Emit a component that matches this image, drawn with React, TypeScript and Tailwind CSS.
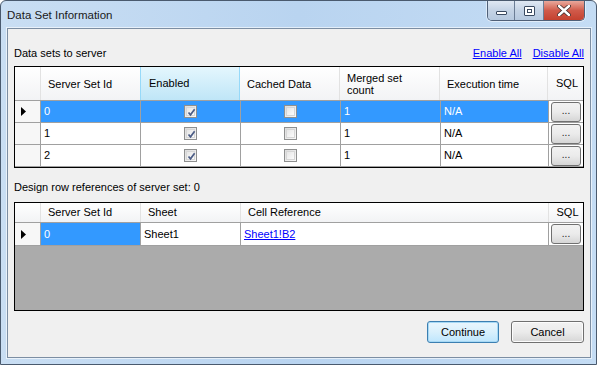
import React from "react";

const font = "font-['Liberation_Sans',Arial,sans-serif]";

function Triangle() {
  return (
    <svg width="5" height="9" viewBox="0 0 5 9" className="block">
      <path d="M0 0 L5 4.5 L0 9 Z" fill="#000" />
    </svg>
  );
}

function CheckBox({ checked }: { checked: boolean }) {
  return (
    <div className="h-[13px] w-[13px] border border-[#8e8f8f] bg-gradient-to-br from-[#dcdcdc] to-[#f8f8f8] p-[1px]">
      <div className="h-full w-full border border-[#d6d6d6] bg-gradient-to-br from-[#e6e6e6] to-[#fbfbfb]">
        {checked && (
          <svg width="9" height="9" viewBox="0 0 9 9" className="block">
            <path d="M1.5 4.5 L3.5 6.8 L7.6 1.2" stroke="#4c5d86" strokeWidth="1.7" fill="none" />
          </svg>
        )}
      </div>
    </div>
  );
}

function DotsButton() {
  return (
    <div className="flex h-[20px] w-[30px] items-center justify-center rounded-[3px] border border-[#707070] bg-gradient-to-b from-[#f2f2f2] via-[#ebebeb] to-[#d6d6d6] text-[10px] leading-none text-[#222]">
      <span className="-mt-[1px]">...</span>
    </div>
  );
}

const cols1 = [
  { label: "Server Set Id", w: "w-[100px]" },
  { label: "Enabled", w: "w-[100px]", hot: true },
  { label: "Cached Data", w: "w-[100px]" },
  { label: "Merged set count", w: "w-[100px]", wrap: true },
  { label: "Execution time", w: "w-[108px]" },
];

const rows1 = ["0", "1", "2"];

function TopGrid() {
  return (
    <div className="mx-[6px] flex flex-col border border-black bg-white">
      <div className="flex h-[34px] border-b border-[#a0a0a0] bg-gradient-to-b from-white to-[#f2f3f5]">
        <div className="w-[26px] shrink-0 border-r border-[#e2e2e2]" />
        {cols1.map((c) =>
          c.hot ? (
            <div
              key={c.label}
              className={`${c.w} -ml-[1px] flex shrink-0 items-center border-x border-[#96d9f9] bg-gradient-to-b from-[#e4f6fd] to-[#bfe6f7] pl-[8px]`}
            >
              {c.label}
            </div>
          ) : (
            <div
              key={c.label}
              className={`${c.w} flex shrink-0 items-center border-r border-[#e2e2e2] pl-[7px] leading-[12px]`}
            >
              {c.wrap ? (
                <span>
                  Merged set
                  <br />
                  count
                </span>
              ) : (
                c.label
              )}
            </div>
          )
        )}
        <div className="flex flex-1 items-center justify-center pl-[3px]">SQL</div>
      </div>
      {rows1.map((id, i) => {
        const sel = i === 0;
        const cell = sel ? "bg-[#3399ff] text-white" : "bg-white text-black";
        return (
          <div key={id} className="flex h-[22px] border-b border-[#a0a0a0]">
            <div className="flex w-[26px] shrink-0 items-center border-r border-[#a0a0a0] bg-[#f7f7f7] pl-[6px]">
              {sel && <Triangle />}
            </div>
            <div className={`flex w-[100px] shrink-0 items-center border-r border-[#a0a0a0] pl-[3px] ${cell}`}>{id}</div>
            <div className={`flex w-[100px] shrink-0 items-center justify-center border-r border-[#a0a0a0] ${cell}`}>
              <CheckBox checked />
            </div>
            <div className={`flex w-[100px] shrink-0 items-center justify-center border-r border-[#a0a0a0] ${cell}`}>
              <CheckBox checked={false} />
            </div>
            <div className={`flex w-[100px] shrink-0 items-center border-r border-[#a0a0a0] pl-[3px] ${cell}`}>1</div>
            <div className={`flex w-[108px] shrink-0 items-center border-r border-[#a0a0a0] pl-[3px] ${cell}`}>N/A</div>
            <div className="flex flex-1 items-center justify-center bg-white">
              <DotsButton />
            </div>
          </div>
        );
      })}
    </div>
  );
}

function BottomGrid() {
  return (
    <div className="mx-[6px] flex flex-col border border-black bg-[#ababab]">
      <div className="flex h-[20px] border-b border-[#a0a0a0] bg-gradient-to-b from-white to-[#f2f3f5]">
        <div className="w-[26px] shrink-0 border-r border-[#e2e2e2]" />
        <div className="flex w-[100px] shrink-0 items-center border-r border-[#e2e2e2] pl-[7px]">Server Set Id</div>
        <div className="flex w-[100px] shrink-0 items-center border-r border-[#e2e2e2] pl-[7px]">Sheet</div>
        <div className="flex w-[308px] shrink-0 items-center border-r border-[#e2e2e2] pl-[7px]">Cell Reference</div>
        <div className="flex flex-1 items-center justify-center pl-[3px]">SQL</div>
      </div>
      <div className="flex h-[23px] border-b border-[#a0a0a0]">
        <div className="flex w-[26px] shrink-0 items-center border-r border-[#a0a0a0] bg-[#f7f7f7] pl-[6px]">
          <Triangle />
        </div>
        <div className="flex w-[100px] shrink-0 items-center border-r border-[#a0a0a0] bg-[#3399ff] pl-[3px] text-white">0</div>
        <div className="flex w-[100px] shrink-0 items-center border-r border-[#a0a0a0] bg-white pl-[3px]">Sheet1</div>
        <div className="flex w-[308px] shrink-0 items-center border-r border-[#a0a0a0] bg-white pl-[3px]">
          <span className="text-[#0000ff] underline">Sheet1!B2</span>
        </div>
        <div className="flex flex-1 items-center justify-center bg-white">
          <DotsButton />
        </div>
      </div>
      <div className="h-[64px]" />
    </div>
  );
}

function TitleButtons() {
  return (
    <div className="flex h-[20px] items-stretch overflow-hidden rounded-b-[5px] border border-t-0 border-[#4f6078] shadow-[0_0_0_1px_rgba(255,255,255,0.5)]">
      <div className="flex w-[27px] items-center justify-center border-r border-[#6b7d95] bg-gradient-to-b from-[#dfe8f3] via-[#c4d3e5] to-[#b6c9df]">
        <div className="mt-[4px] h-[4px] w-[11px] rounded-[1px] border border-[#3a4a60] bg-white" />
      </div>
      <div className="flex w-[29px] items-center justify-center border-r border-[#6b7d95] bg-gradient-to-b from-[#dfe8f3] via-[#c4d3e5] to-[#b6c9df]">
        <div className="flex h-[10px] w-[11px] items-center justify-center rounded-[1px] border border-[#3a4a60] bg-white">
          <div className="h-[4px] w-[5px] border border-[#3a4a60]" />
        </div>
      </div>
      <div className="flex w-[40px] items-center justify-center bg-gradient-to-b from-[#e8a89c] via-[#d05a4a] to-[#c4412f]">
        <svg width="14" height="11" viewBox="0 0 14 11">
          <path d="M2 1 L12 10 M12 1 L2 10" stroke="#3a2a2a" strokeWidth="4" strokeLinecap="round" />
          <path d="M2 1 L12 10 M12 1 L2 10" stroke="#fff" strokeWidth="2.4" strokeLinecap="round" />
        </svg>
      </div>
    </div>
  );
}

export default function App() {
  return (
    <div
      className={`${font} flex h-[365px] w-[597px] flex-col overflow-hidden rounded-t-[6px] border border-[#4a5a6e] bg-gradient-to-r from-[#c9def3] via-[#b9d4f0] to-[#c4dcf4] text-[11px] text-black`}
    >
      <div className="flex h-[27px] shrink-0 items-start justify-between pr-[11px]">
        <div className="pl-[6px] pt-[7px] text-[11.5px] leading-[14px] text-[#1a1a1a]">Data Set Information</div>
        <TitleButtons />
      </div>
      <div className="mb-[6px] ml-[6px] mr-[5px] flex flex-1 flex-col border border-[#7c8ea3] bg-[#f0f0f0] pb-[14px] pt-[18px] shadow-[0_0_0_1px_rgba(255,255,255,0.6)]">
        <div className="flex h-[13px] items-center justify-between px-[6px] leading-[13px]">
          <span>Data sets to server</span>
          <div className="flex gap-[11px] text-[#0000ff]">
            <span className="underline">Enable All</span>
            <span className="underline">Disable All</span>
          </div>
        </div>
        <div className="mt-[6px]">
          <TopGrid />
        </div>
        <div className="mt-[13px] h-[13px] px-[6px] leading-[13px]">Design row references of server set: 0</div>
        <div className="mt-[8px]">
          <BottomGrid />
        </div>
        <div className="mt-[10px] flex justify-end gap-[12px] px-[6px]">
          <button className="h-[22px] w-[72px] rounded-[3px] border border-[#3c7fb1] bg-gradient-to-b from-[#eaf6fd] via-[#d9f0fc] to-[#bee6fd] shadow-[inset_0_0_0_1px_#a7d9f5]">
            Continue
          </button>
          <button className="h-[22px] w-[73px] rounded-[3px] border border-[#707070] bg-gradient-to-b from-[#f2f2f2] via-[#ebebeb] to-[#d6d6d6] shadow-[inset_0_0_0_1px_#fcfcfc]">
            Cancel
          </button>
        </div>
      </div>
    </div>
  );
}
